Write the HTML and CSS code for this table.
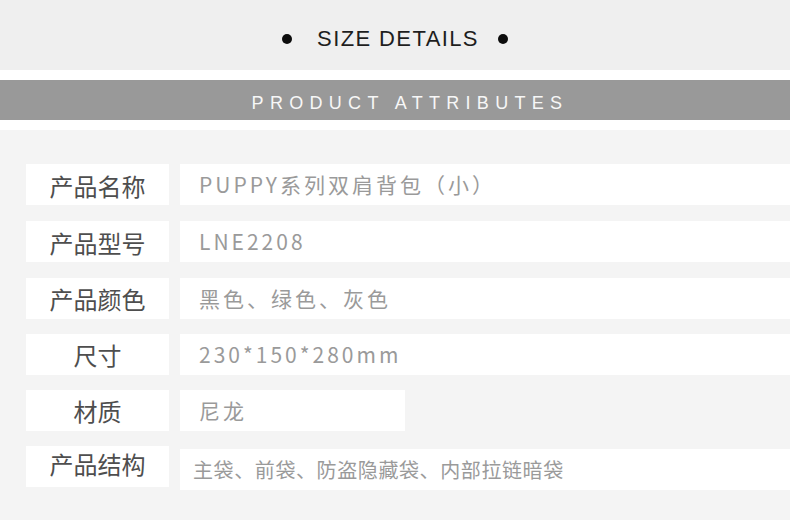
FILE: index.html
```html
<!DOCTYPE html>
<html lang="zh-CN">
<head>
<meta charset="utf-8">
<title>SIZE DETAILS</title>
<link rel="stylesheet" href="styles.css">
</head>
<body>
  <header class="hero">
    <span class="dot"></span>
    <h1 class="hero-title">SIZE DETAILS</h1>
    <span class="dot"></span>
  </header>
  <div class="bar">PRODUCT ATTRIBUTES</div>
  <section class="attrs">
    <div class="row row--a">
      <div class="label label--down">产品名称</div>
      <div class="value">PUPPY系列双肩背包（小）</div>
    </div>
    <div class="row row--a">
      <div class="label label--down">产品型号</div>
      <div class="value">LNE2208</div>
    </div>
    <div class="row">
      <div class="label">产品颜色</div>
      <div class="value">黑色、绿色、灰色</div>
    </div>
    <div class="row">
      <div class="label">尺寸</div>
      <div class="value">230*150*280mm</div>
    </div>
    <div class="row">
      <div class="label">材质</div>
      <div class="value value--short">尼龙</div>
    </div>
    <div class="row row--last">
      <div class="label label--up">产品结构</div>
      <div class="value value--small">主袋、前袋、防盗隐藏袋、内部拉链暗袋</div>
    </div>
  </section>
</body>
</html>
```

FILE: styles.css
```css
html, body {
  margin: 0;
  padding: 0;
  background: #ffffff;
}

body {
  font-family: "Noto Sans CJK SC", "Noto Sans", sans-serif;
  width: 790px;
}

.hero {
  height: 70px;
  box-sizing: border-box;
  padding-top: 28px;
  background: #efefef;
  display: flex;
  justify-content: center;
  align-items: flex-start;
}

.hero-title {
  margin: 0 19px 0 25px;
  font-family: "Liberation Sans", Arial, sans-serif;
  font-weight: normal;
  font-size: 22px;
  line-height: 22px;
  letter-spacing: 1.4px;
  color: #1e1e1e;
}

.dot {
  width: 10px;
  height: 10px;
  margin-top: 6px;
  border-radius: 50%;
  background: #0c0c0c;
  flex: none;
}

.bar {
  margin-top: 10px;
  height: 40px;
  box-sizing: border-box;
  padding: 6px 0 0 30px;
  line-height: 34px;
  background: #999999;
  color: #f7f7f7;
  text-align: center;
  font-family: "Liberation Sans", Arial, sans-serif;
  font-size: 18px;
  letter-spacing: 6.3px;
}

.attrs {
  margin-top: 10px;
  background: #f4f4f4;
  padding: 34px 0 30px 26px;
  display: flex;
  flex-direction: column;
  gap: 15px;
}

.row {
  display: grid;
  grid-template-columns: 143px 1fr;
  column-gap: 11px;
  align-items: start;
}

.row--a {
  margin-bottom: 1px;
}

.label {
  height: 41px;
  background: #ffffff;
  color: #4e4e4e;
  font-size: 24px;
  line-height: 41px;
  text-align: center;
}

.label--down {
  line-height: 44px;
}

.label--up {
  line-height: 36px;
}

.value {
  height: 41px;
  background: #ffffff;
  color: #9a9a9a;
  font-size: 21px;
  line-height: 41px;
  letter-spacing: 3px;
  padding-left: 19px;
  white-space: nowrap;
}

.value--short {
  width: 225px;
  box-sizing: border-box;
}

.value--small {
  margin-top: 3px;
  font-size: 20px;
  letter-spacing: 0.6px;
  padding-left: 13px;
}
```
